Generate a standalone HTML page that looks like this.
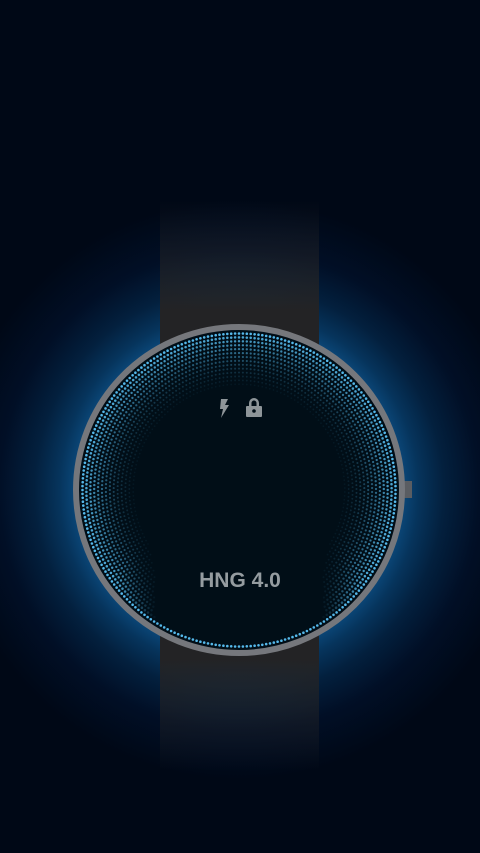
<!DOCTYPE html>
<html><head><style>
html,body{margin:0;padding:0;width:480px;height:853px;overflow:hidden;background:#000814;}
.bg{position:absolute;left:0;top:0;width:480px;height:853px;background:radial-gradient(circle at 239px 490px,#0a4474 0px,#0a4474 166px,#06345c 180px,#03203e 205px,#010f26 240px,#000816 290px);}
.strap{position:absolute;left:160px;top:200px;width:159px;height:570px;background:linear-gradient(to bottom,rgba(34,34,36,0) 0px,#232325 110px,#232325 460px,rgba(34,34,36,0) 570px);}
svg{position:absolute;left:0;top:0;}
.t{position:absolute;left:0;width:480px;text-align:center;top:569px;font:bold 21px "Liberation Sans",sans-serif;color:#959ca0;}
</style></head><body>
<div class="bg"></div>
<div class="strap"></div>
<svg width="480" height="853" id="s">
<rect x="403" y="481" width="9" height="17" fill="#5a5d62"/>
<circle cx="239" cy="490" r="163" fill="#010e17" stroke="#75777c" stroke-width="6"/>
<g id="d"></g>
<g fill="#8e9599">
<path d="M221 399h7l-3 6h4l-8 13 2-9h-3z"/>
<rect x="246" y="406" width="16" height="11" rx="1"/>
<path d="M249 406v-3a5 5 0 0 1 10 0v3h-2.5v-3a2.5 2.5 0 0 0-5 0v3z"/>
<circle cx="254" cy="411" r="1.8" fill="#010e17"/>
</g>
</svg>
<div class="t">HNG 4.0</div>
<script>
var g=document.getElementById('d'),h='',k=0;
for(var r=156.5;r>92;r-=3.9){
 var n=Math.round(2*Math.PI*r/3.9);
 var f=(r-92)/64.5;
 for(var i=0;i<n;i++){
  var a=i/n*2*Math.PI;
  var x=239+r*Math.sin(a),y=490-r*Math.cos(a);
  var o=Math.pow(f,1.8);
  var ad=Math.abs(a-Math.PI);
  if(k>0){var w=0.55+0.25*(1-f); if(ad<w+0.35) o*=Math.max(0,(ad-w)/0.35);}
  if(o<0.05) continue;
  var rad=0.8+0.5*f;
  h+='<circle cx="'+x.toFixed(1)+'" cy="'+y.toFixed(1)+'" r="'+rad.toFixed(2)+'" fill="#55b8ea" fill-opacity="'+o.toFixed(2)+'"/>';
 }
 k++;
}
g.innerHTML=h;
</script>
</body></html>
